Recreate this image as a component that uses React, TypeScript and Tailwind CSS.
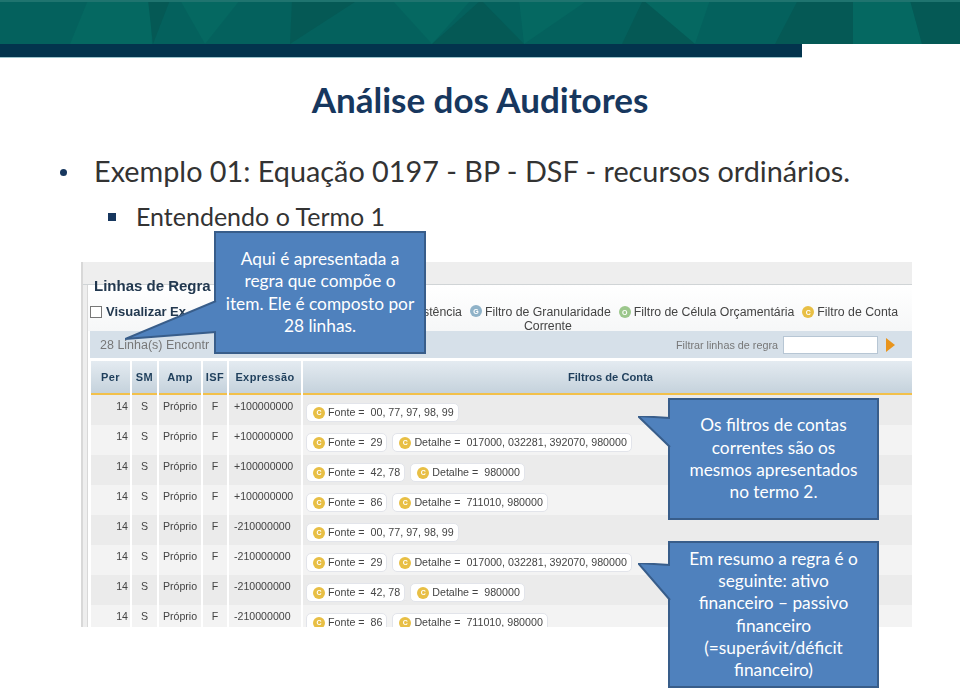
const rows = [
  { expr: "+100000000", fonte: "00, 77, 97, 98, 99", detalhe: "" },
  { expr: "+100000000", fonte: "29", detalhe: "017000, 032281, 392070, 980000" },
  { expr: "+100000000", fonte: "42, 78", detalhe: "980000" },
  { expr: "+100000000", fonte: "86", detalhe: "711010, 980000" },
  { expr: "-210000000", fonte: "00, 77, 97, 98, 99", detalhe: "" },
  { expr: "-210000000", fonte: "29", detalhe: "017000, 032281, 392070, 980000" },
  { expr: "-210000000", fonte: "42, 78", detalhe: "980000" },
  { expr: "-210000000", fonte: "86", detalhe: "711010, 980000" },
];

const lightTriangles = [
  "392,0 471,0 432,44",
  "519,0 588,0 524,44",
  "643,0 710,0 695,44",
  "70,44 88,0 150,0 152,44",
  "205,44 240,0 180,0",
  "853,0 910,0 922,44 853,44",
];

const darkTriangles = [
  "432,44 481,0 524,44",
  "153,44 170,0 148,0",
  "290,44 358,0 298,0 292,0",
  "622,44 695,44 643,0",
  "775,44 798,0 830,0 853,0 853,44",
  "922,44 910,0 960,0 960,44",
];

function Coin({ letter = "C", color = "#e8bf45" }: { letter?: string; color?: string }) {
  return (
    <span
      className="flex h-[12px] w-[12px] shrink-0 items-center justify-center rounded-full text-[7px] font-bold leading-none text-white"
      style={{ backgroundColor: color }}
    >
      {letter}
    </span>
  );
}

function Chip({ label, value }: { label: string; value: string }) {
  return (
    <span className="flex h-[19px] items-center gap-[3px] rounded-[5px] border border-[#e2e4ea] bg-white pl-[6px] pr-[4px] text-[10.7px] text-[#444]">
      <Coin />
      <span className="whitespace-pre">
        {label} =  {value}
      </span>
    </span>
  );
}

function Callout({
  className,
  lines,
  tail,
  tailClass,
  tailBox,
}: {
  className: string;
  lines: string[];
  tail: string;
  tailClass: string;
  tailBox: string;
}) {
  return (
    <div
      className={`absolute flex flex-col items-center justify-center border-2 border-[#385d8a] bg-[#4f81bd] text-center font-['Lato',sans-serif] text-[17.3px] leading-[22.3px] text-white ${className}`}
    >
      <svg viewBox={tailBox} className={`absolute ${tailClass}`}>
        <polygon points={tail} fill="#4f81bd" />
        <polyline points={tail} fill="none" stroke="#385d8a" strokeWidth="2" />
      </svg>
      {lines.map((l) => (
        <span key={l} className="whitespace-nowrap">
          {l}
        </span>
      ))}
    </div>
  );
}

export default function App() {
  return (
    <div className="relative h-[692px] w-[960px] overflow-hidden bg-white font-['Lato',sans-serif]">
      <svg viewBox="0 0 960 44" className="block h-[44px] w-full" preserveAspectRatio="none">
        <rect width="960" height="44" fill="#04615d" />
        {lightTriangles.map((p) => (
          <polygon key={p} points={p} fill="#056861" />
        ))}
        {darkTriangles.map((p) => (
          <polygon key={p} points={p} fill="#055955" />
        ))}
        <rect width="960" height="2" fill="#1f746f" />
      </svg>
      <div className="h-[14px] w-[802px] border-b border-[#9cc4cc] bg-[#03344d]" />

      <h1 className="mt-[21px] text-center text-[35px] font-bold leading-[40px] text-[#17375e]">Análise dos Auditores</h1>

      <div className="mt-[35px] flex h-[36px] items-center text-[28.8px] text-[#333]">
        <span className="ml-[60px] mr-[27px] h-[7px] w-[7px] rounded-full bg-[#17375e]" />
        <span>Exemplo 01: Equação 0197 - BP - DSF - recursos ordinários.</span>
      </div>
      <div className="mt-[11px] flex h-[32px] items-center text-[25px] text-[#333]">
        <span className="ml-[108px] mr-[20px] h-[8px] w-[8px] bg-[#17375e]" />
        <span>Entendendo o Termo 1</span>
      </div>

      <div className="ml-[81px] mt-[29px] flex h-[365px] w-[831px] flex-col overflow-hidden border-l-2 border-[#d8d8d8] bg-[#eeeeee] font-['Liberation_Sans',sans-serif] blur-[0.3px]">
        <div className="h-[23px] shrink-0 border-b border-[#d0d4d6]" />
        <div className="ml-[4px] flex-1 border-l border-[#d8d8d8] bg-white">
          <div className="flex h-[46px] flex-col bg-gradient-to-b from-white to-[#f6f7f8]">
            <div className="-mt-[8px] pl-[6px] text-[15px] font-bold leading-[18px] text-[#22384f]">Linhas de Regra</div>
            <div className="mt-[10px] flex items-start justify-between pl-[2px] pr-[14px] text-[12.3px] leading-[14px] text-[#444]">
              <div className="flex items-center gap-[4px]">
                <span className="h-[12px] w-[12px] border border-[#777] bg-white" />
                <span className="text-[13px] font-bold text-[#22384f]">Visualizar Ex</span>
              </div>
              <div className="flex items-start gap-[8px]">
                <span>stência</span>
                <span className="flex items-start gap-[3px]">
                  <Coin letter="G" color="#8fb2c8" />
                  <span className="text-center">
                    Filtro de Granularidade
                    <br />
                    Corrente
                  </span>
                </span>
                <span className="flex items-center gap-[3px]">
                  <Coin letter="O" color="#9cc78c" />
                  Filtro de Célula Orçamentária
                </span>
                <span className="flex items-center gap-[3px]">
                  <Coin />
                  Filtro de Conta
                </span>
              </div>
            </div>
          </div>

          <div className="ml-[2px] flex h-[27px] items-center justify-between bg-[#d6e0e9] pl-[10px] pr-[17px] pt-[1px] text-[#777]">
            <span className="text-[12.5px]">28 Linha(s) Encontr</span>
            <div className="flex items-center gap-[5px] text-[10.8px]">
              <span>Filtrar linhas de regra</span>
              <span className="h-[18px] w-[95px] border border-[#b7c6d4] bg-white" />
              <span className="ml-[3px] h-0 w-0 border-y-[7px] border-l-[9px] border-y-transparent border-l-[#e8941c]" />
            </div>
          </div>

          <div className="ml-[3px] mt-[3px] grid grid-cols-[39px_25px_42px_24px_72px_1fr] gap-x-[2px] text-[10.6px]">
            {["Per", "SM", "Amp", "ISF", "Expressão"].map((h) => (
              <div
                key={h}
                className="flex h-[34px] items-center justify-center border-b-2 border-[#f2c04a] bg-gradient-to-b from-[#e4ebf1] to-[#c5d2dc] pt-[1px] text-[11px] font-bold tracking-[0.4px] text-[#1f3f5c]"
              >
                {h}
              </div>
            ))}
            <div className="flex h-[34px] items-center justify-center border-b-2 border-[#f2c04a] bg-gradient-to-b from-[#e4ebf1] to-[#c5d2dc] pl-[6px] pt-[1px] text-[11.2px] font-bold text-[#1f3f5c]">
              Filtros de Conta
            </div>
            {rows.map((r, i) => {
              const bg = i % 2 === 0 ? "bg-[#ebebeb]" : "bg-[#f3f3f3]";
              const cell = `flex h-[30px] justify-center pt-[4px] text-[#444] ${bg}`;
              return (
                <div key={i} className="contents">
                  <div className={`${cell} !justify-end pr-[2px]`}>14</div>
                  <div className={cell}>S</div>
                  <div className={cell}>Próprio</div>
                  <div className={cell}>F</div>
                  <div className={`${cell} !justify-start pl-[5px]`}>{r.expr}</div>
                  <div className={`flex h-[30px] items-start gap-[5px] pl-[3px] pt-[8px] ${bg}`}>
                    <Chip label="Fonte" value={r.fonte} />
                    {r.detalhe && <Chip label="Detalhe" value={r.detalhe} />}
                  </div>
                </div>
              );
            })}
          </div>
        </div>
      </div>

      <Callout
        className="left-[214px] top-[231px] h-[123px] w-[212px]"
        lines={["Aqui é apresentada a", "regra que compõe o", "item. Ele é composto por", "28 linhas."]}
        tail="91,0 0,38 91,31"
        tailBox="0 0 92 40"
        tailClass="left-[-91px] top-[68px] h-[40px] w-[92px]"
      />
      <Callout
        className="left-[668px] top-[398px] h-[122px] w-[211px]"
        lines={["Os filtros de contas", "correntes são os", "mesmos apresentados", "no termo 2."]}
        tail="32,2 0,0 32,31"
        tailBox="0 0 33 34"
        tailClass="left-[-32px] top-[16px] h-[34px] w-[33px]"
      />
      <Callout
        className="left-[668px] top-[541px] h-[147px] w-[211px]"
        lines={["Em resumo a regra é o", "seguinte: ativo", "financeiro – passivo", "financeiro", "(=superávit/déficit", "financeiro)"]}
        tail="32,2 0,0 32,37"
        tailBox="0 0 33 40"
        tailClass="left-[-32px] top-[20px] h-[40px] w-[33px]"
      />
    </div>
  );
}
